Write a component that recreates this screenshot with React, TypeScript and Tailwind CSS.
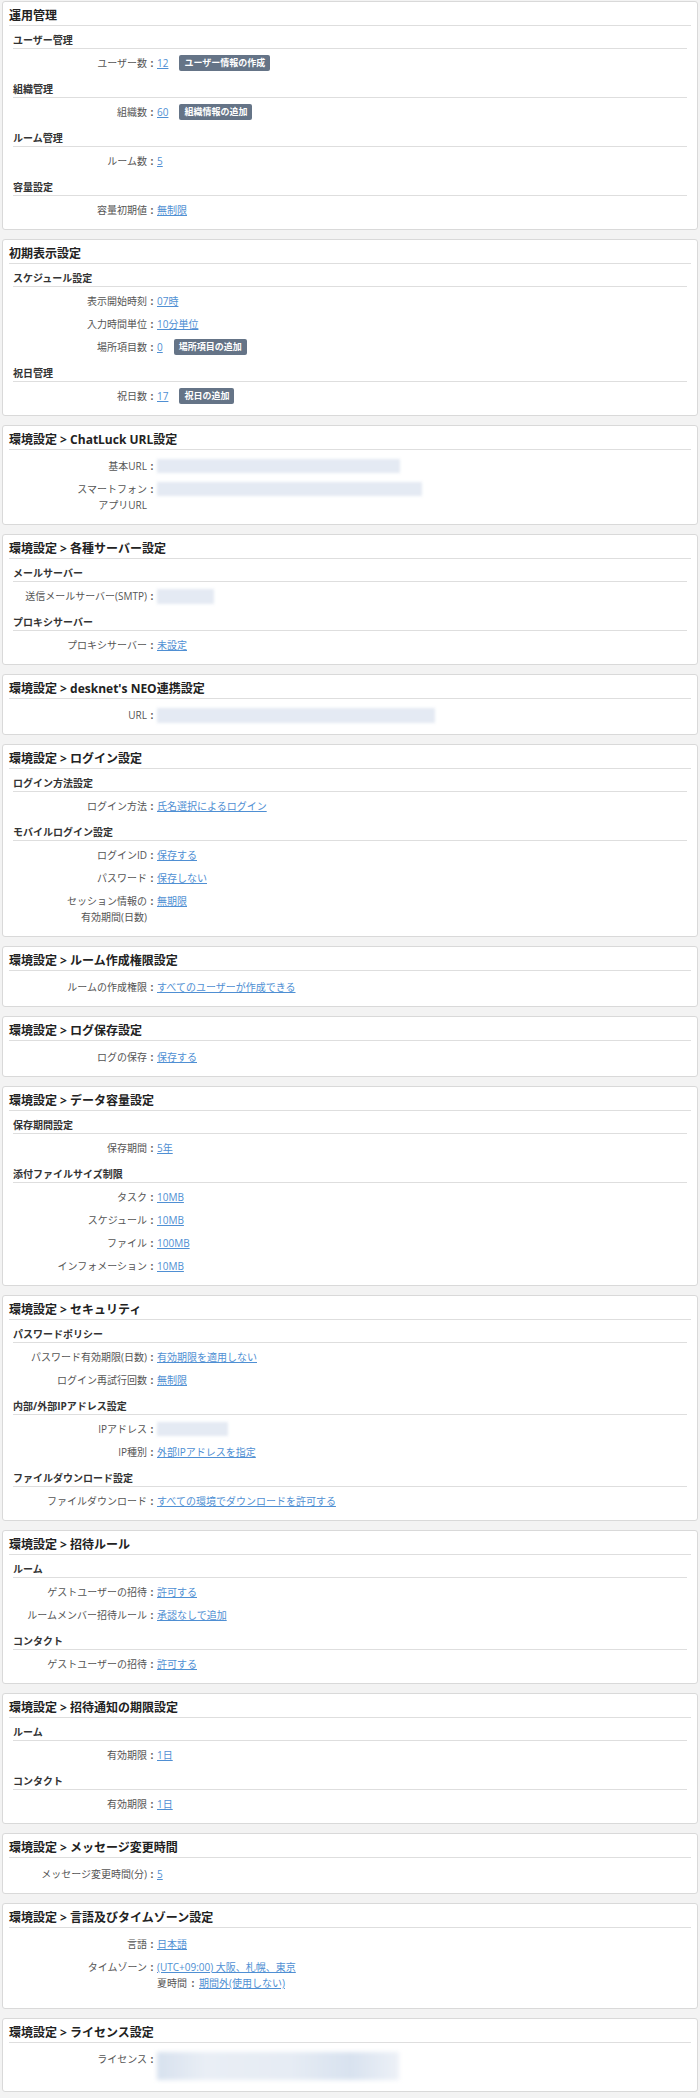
import React from "react";

function Card({ title, children }: { title: string; children: React.ReactNode }) {
  return (
    <div className="bg-white border border-[#d9d9d9] rounded-[3px] pt-[5px] pb-[7px] px-[6px]">
      <div className="text-[12px] font-bold leading-[18px] text-[#222] border-b border-[#dedede]">{title}</div>
      {children}
    </div>
  );
}

function Section({ title, children }: { title?: string; children: React.ReactNode }) {
  return (
    <div className={title ? "mt-[6px]" : "mt-[2px]"}>
      {title && (
        <div className="mx-[4px] text-[10px] font-bold leading-[16px] text-[#333] border-b border-[#dedede]">{title}</div>
      )}
      <div className="flex flex-col gap-[7px] pt-[6px] pb-[4px]">{children}</div>
    </div>
  );
}

function Row({ label, children }: { label: React.ReactNode; children: React.ReactNode }) {
  return (
    <div className="flex items-start text-[10px] leading-[16px]">
      <div className="w-[138px] shrink-0 text-right text-[#555]">{label}</div>
      <div className="w-[10px] shrink-0 text-center text-[#555] font-bold">:</div>
      <div className="flex items-start">{children}</div>
    </div>
  );
}

function Val({ children }: { children: React.ReactNode }) {
  return <a className="text-[#4f8fd3] underline underline-offset-[1px] cursor-pointer">{children}</a>;
}

function Btn({ children }: { children: React.ReactNode }) {
  return (
    <span className="ml-[11px] h-[16px] px-[5px] rounded-[2px] bg-[#657487] text-white text-[9px] font-bold leading-[16px] whitespace-nowrap">
      {children}
    </span>
  );
}

function Blur({ w, h = "h-[14px]" }: { w: string; h?: string }) {
  return <span className={`block mt-[1px] ${w} ${h} bg-[#e4eaf3] blur-[1.5px]`} />;
}

export default function App() {
  return (
    <div className="min-h-screen bg-[#f3f3f3] px-[2px] pt-[1px] pb-[4px] font-['Open_Sans','Noto_Sans_CJK_JP',sans-serif]">
      <div className="flex flex-col gap-[9px]">
        <Card title="運用管理">
          <Section title="ユーザー管理">
            <Row label="ユーザー数">
              <Val>12</Val>
              <Btn>ユーザー情報の作成</Btn>
            </Row>
          </Section>
          <Section title="組織管理">
            <Row label="組織数">
              <Val>60</Val>
              <Btn>組織情報の追加</Btn>
            </Row>
          </Section>
          <Section title="ルーム管理">
            <Row label="ルーム数">
              <Val>5</Val>
            </Row>
          </Section>
          <Section title="容量設定">
            <Row label="容量初期値">
              <Val>無制限</Val>
            </Row>
          </Section>
        </Card>

        <Card title="初期表示設定">
          <Section title="スケジュール設定">
            <Row label="表示開始時刻">
              <Val>07時</Val>
            </Row>
            <Row label="入力時間単位">
              <Val>10分単位</Val>
            </Row>
            <Row label="場所項目数">
              <Val>0</Val>
              <Btn>場所項目の追加</Btn>
            </Row>
          </Section>
          <Section title="祝日管理">
            <Row label="祝日数">
              <Val>17</Val>
              <Btn>祝日の追加</Btn>
            </Row>
          </Section>
        </Card>

        <Card title="環境設定 > ChatLuck URL設定">
          <Section>
            <Row label="基本URL">
              <Blur w="w-[243px]" />
            </Row>
            <Row
              label={
                <>
                  スマートフォン
                  <br />
                  アプリURL
                </>
              }
            >
              <Blur w="w-[265px]" />
            </Row>
          </Section>
        </Card>

        <Card title="環境設定 > 各種サーバー設定">
          <Section title="メールサーバー">
            <Row label="送信メールサーバー(SMTP)">
              <Blur w="w-[57px]" h="h-[15px]" />
            </Row>
          </Section>
          <Section title="プロキシサーバー">
            <Row label="プロキシサーバー">
              <Val>未設定</Val>
            </Row>
          </Section>
        </Card>

        <Card title="環境設定 > desknet's NEO連携設定">
          <Section>
            <Row label="URL">
              <Blur w="w-[278px]" h="h-[15px]" />
            </Row>
          </Section>
        </Card>

        <Card title="環境設定 > ログイン設定">
          <Section title="ログイン方法設定">
            <Row label="ログイン方法">
              <Val>氏名選択によるログイン</Val>
            </Row>
          </Section>
          <Section title="モバイルログイン設定">
            <Row label="ログインID">
              <Val>保存する</Val>
            </Row>
            <Row label="パスワード">
              <Val>保存しない</Val>
            </Row>
            <Row
              label={
                <>
                  セッション情報の
                  <br />
                  有効期間(日数)
                </>
              }
            >
              <Val>無期限</Val>
            </Row>
          </Section>
        </Card>

        <Card title="環境設定 > ルーム作成権限設定">
          <Section>
            <Row label="ルームの作成権限">
              <Val>すべてのユーザーが作成できる</Val>
            </Row>
          </Section>
        </Card>

        <Card title="環境設定 > ログ保存設定">
          <Section>
            <Row label="ログの保存">
              <Val>保存する</Val>
            </Row>
          </Section>
        </Card>

        <Card title="環境設定 > データ容量設定">
          <Section title="保存期間設定">
            <Row label="保存期間">
              <Val>5年</Val>
            </Row>
          </Section>
          <Section title="添付ファイルサイズ制限">
            <Row label="タスク">
              <Val>10MB</Val>
            </Row>
            <Row label="スケジュール">
              <Val>10MB</Val>
            </Row>
            <Row label="ファイル">
              <Val>100MB</Val>
            </Row>
            <Row label="インフォメーション">
              <Val>10MB</Val>
            </Row>
          </Section>
        </Card>

        <Card title="環境設定 > セキュリティ">
          <Section title="パスワードポリシー">
            <Row label="パスワード有効期限(日数)">
              <Val>有効期限を適用しない</Val>
            </Row>
            <Row label="ログイン再試行回数">
              <Val>無制限</Val>
            </Row>
          </Section>
          <Section title="内部/外部IPアドレス設定">
            <Row label="IPアドレス">
              <Blur w="w-[71px]" />
            </Row>
            <Row label="IP種別">
              <Val>外部IPアドレスを指定</Val>
            </Row>
          </Section>
          <Section title="ファイルダウンロード設定">
            <Row label="ファイルダウンロード">
              <Val>すべての環境でダウンロードを許可する</Val>
            </Row>
          </Section>
        </Card>

        <Card title="環境設定 > 招待ルール">
          <Section title="ルーム">
            <Row label="ゲストユーザーの招待">
              <Val>許可する</Val>
            </Row>
            <Row label="ルームメンバー招待ルール">
              <Val>承認なしで追加</Val>
            </Row>
          </Section>
          <Section title="コンタクト">
            <Row label="ゲストユーザーの招待">
              <Val>許可する</Val>
            </Row>
          </Section>
        </Card>

        <Card title="環境設定 > 招待通知の期限設定">
          <Section title="ルーム">
            <Row label="有効期限">
              <Val>1日</Val>
            </Row>
          </Section>
          <Section title="コンタクト">
            <Row label="有効期限">
              <Val>1日</Val>
            </Row>
          </Section>
        </Card>

        <Card title="環境設定 > メッセージ変更時間">
          <Section>
            <Row label="メッセージ変更時間(分)">
              <Val>5</Val>
            </Row>
          </Section>
        </Card>

        <Card title="環境設定 > 言語及びタイムゾーン設定">
          <Section>
            <Row label="言語">
              <Val>日本語</Val>
            </Row>
            <Row label="タイムゾーン">
              <div className="flex flex-col pb-[6px]">
                <Val>(UTC+09:00) 大阪、札幌、東京</Val>
                <div className="flex">
                  <span className="text-[#555]">夏時間</span>
                  <span className="w-[12px] text-center text-[#555] font-bold">:</span>
                  <Val>期間外(使用しない)</Val>
                </div>
              </div>
            </Row>
          </Section>
        </Card>

        <Card title="環境設定 > ライセンス設定">
          <Section>
            <Row label="ライセンス">
              <span className="block mt-[1px] w-[242px] h-[28px] bg-[linear-gradient(90deg,#d7e1ee_0%,#e9eef5_20%,#e6ecf4_55%,#d8e2ef_80%,#edf1f7_100%)] blur-[2px]" />
            </Row>
          </Section>
        </Card>
      </div>
    </div>
  );
}
